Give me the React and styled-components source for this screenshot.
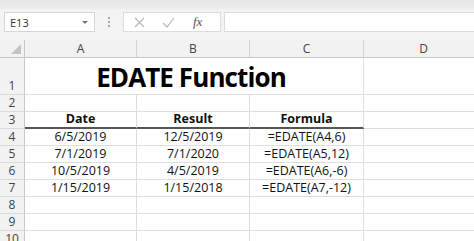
import React from "react";
import styled, { createGlobalStyle } from "styled-components";

const Global = createGlobalStyle`
  html, body {
    margin: 0;
    padding: 0;
    background: #ffffff;
    overflow: hidden;
  }
  body {
    font-family: "Open Sans", "Noto Sans", sans-serif;
  }
`;

const Window = styled.div`
  width: 474px;
  height: 241px;
  display: flex;
  flex-direction: column;
  overflow: hidden;
`;

const FormulaBar = styled.div`
  height: 40px;
  display: flex;
  align-items: flex-start;
  padding-top: 12px;
  box-sizing: border-box;
  background: linear-gradient(#e4e4e4 0px, #ececec 8px, #f3f3f3 10px, #f3f3f3);
  flex-shrink: 0;
`;

const NameBox = styled.div`
  margin-left: 4px;
  width: 91px;
  height: 20px;
  box-sizing: border-box;
  background: #fff;
  border: 1px solid #d6d6d6;
  display: flex;
  align-items: center;
  justify-content: space-between;
  padding: 0 5px 0 5px;
  font-size: 11px;
  color: #333;
`;

const Caret = styled.span`
  width: 0;
  height: 0;
  border-left: 3px solid transparent;
  border-right: 3px solid transparent;
  border-top: 3px solid #777;
  margin-right: 1px;
`;

const Grip = styled.div`
  width: 28px;
  height: 20px;
  display: flex;
  flex-direction: column;
  align-items: center;
  justify-content: center;
  gap: 2px;

  span {
    width: 2px;
    height: 2px;
    background: #a8a8a8;
  }
`;

const ButtonBox = styled.div`
  width: 98px;
  height: 20px;
  box-sizing: border-box;
  background: #fff;
  border: 1px solid #dcdcdc;
  display: flex;
  align-items: center;
  padding-left: 10px;
  gap: 17px;
`;

const Fx = styled.span`
  font-family: "Liberation Serif", serif;
  font-style: italic;
  font-size: 13px;
  color: #555;
  margin-left: 1px;
`;

const FormulaInput = styled.div`
  margin-left: 3px;
  flex: 1;
  height: 20px;
  box-sizing: border-box;
  background: #fff;
  border: 1px solid #dcdcdc;
  border-right: none;
`;

const Sheet = styled.div`
  display: grid;
  grid-template-columns: 25px 112px 113px 114px 120px;
  grid-template-rows: 18px 37px repeat(9, 17px);
`;

const Corner = styled.div`
  background: #f2f2f2;
  border-right: 1px solid #c8c8c8;
  border-bottom: 1px solid #c8c8c8;
  box-sizing: border-box;
  position: relative;

  &::after {
    content: "";
    position: absolute;
    right: 3px;
    bottom: 3px;
    width: 0;
    height: 0;
    border-left: 10px solid transparent;
    border-bottom: 10px solid #c4c4c4;
  }
`;

const ColHead = styled.div`
  background: #f2f2f2;
  border-right: 1px solid #d4d4d4;
  border-bottom: 1px solid #c8c8c8;
  box-sizing: border-box;
  display: flex;
  align-items: center;
  justify-content: center;
  font-size: 12px;
  color: #444;
`;

const RowHead = styled.div`
  background: #f2f2f2;
  border-right: 1px solid #c8c8c8;
  border-bottom: 1px solid #dadada;
  box-sizing: border-box;
  display: flex;
  align-items: flex-end;
  justify-content: center;
  font-size: 12px;
  line-height: 16px;
  color: #444;
`;

const Cell = styled.div`
  border-right: 1px solid #dedede;
  border-bottom: ${(p) => (p.$thick ? "2px solid #555" : "1px solid #dedede")};
  box-sizing: border-box;
  display: flex;
  align-items: flex-end;
  justify-content: center;
  font-size: 12.5px;
  line-height: 16px;
  color: #111;
  font-weight: ${(p) => (p.$bold ? 700 : 400)};
  grid-column: ${(p) => p.$span || "auto"};
  white-space: nowrap;
`;

const Title = styled(Cell)`
  font-size: 26px;
  font-weight: 700;
  line-height: 34px;
  color: #000;
  letter-spacing: -0.9px;
  padding-right: 6px;
`;

const rows = [
  ["6/5/2019", "12/5/2019", "=EDATE(A4,6)"],
  ["7/1/2019", "7/1/2020", "=EDATE(A5,12)"],
  ["10/5/2019", "4/5/2019", "=EDATE(A6,-6)"],
  ["1/15/2019", "1/15/2018", "=EDATE(A7,-12)"],
];

const Cross = () => (
  <svg width="11" height="11" viewBox="0 0 11 11">
    <path d="M1 1 L10 10 M10 1 L1 10" stroke="#b8b8b8" strokeWidth="1.2" fill="none" />
  </svg>
);

const Check = () => (
  <svg width="13" height="11" viewBox="0 0 13 11">
    <path d="M1 6 L5 10 L12 1" stroke="#b8b8b8" strokeWidth="1.2" fill="none" />
  </svg>
);

export default function App() {
  return (
    <Window>
      <Global />
      <FormulaBar>
        <NameBox>
          E13
          <Caret />
        </NameBox>
        <Grip>
          <span />
          <span />
          <span />
        </Grip>
        <ButtonBox>
          <Cross />
          <Check />
          <Fx>fx</Fx>
        </ButtonBox>
        <FormulaInput />
      </FormulaBar>
      <Sheet>
        <Corner />
        {["A", "B", "C", "D"].map((c) => (
          <ColHead key={c}>{c}</ColHead>
        ))}

        <RowHead>1</RowHead>
        <Title $span="span 3">EDATE Function</Title>
        <Cell />

        <RowHead>2</RowHead>
        <Cell />
        <Cell />
        <Cell />
        <Cell />

        <RowHead>3</RowHead>
        <Cell $bold $thick>Date</Cell>
        <Cell $bold $thick>Result</Cell>
        <Cell $bold $thick>Formula</Cell>
        <Cell />

        {rows.map((r, i) => (
          <React.Fragment key={i}>
            <RowHead>{i + 4}</RowHead>
            <Cell>{r[0]}</Cell>
            <Cell>{r[1]}</Cell>
            <Cell>{r[2]}</Cell>
            <Cell />
          </React.Fragment>
        ))}

        {[8, 9, 10].map((n) => (
          <React.Fragment key={n}>
            <RowHead>{n}</RowHead>
            <Cell />
            <Cell />
            <Cell />
            <Cell />
          </React.Fragment>
        ))}
      </Sheet>
    </Window>
  );
}
